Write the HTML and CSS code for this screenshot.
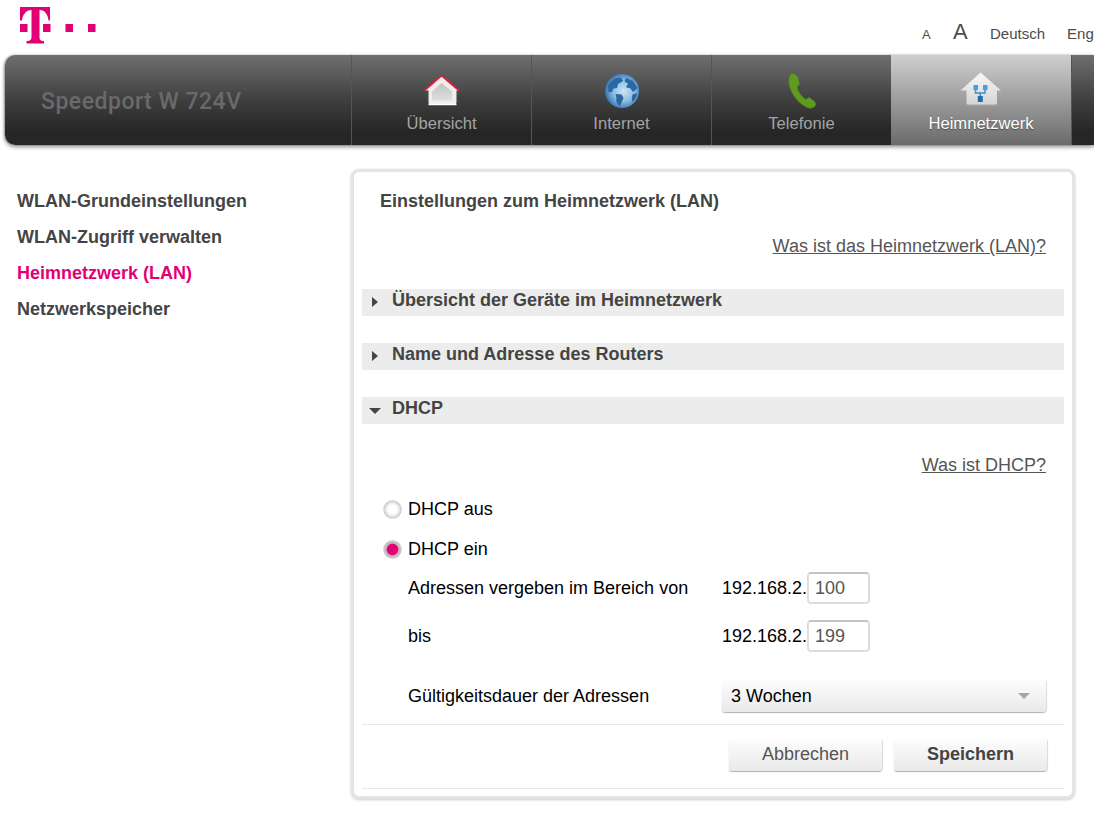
FILE: index.html
```html
<!DOCTYPE html>
<html lang="de">
<head>
<meta charset="utf-8">
<title>Speedport W 724V</title>
<link rel="stylesheet" href="styles.css">
</head>
<body>
<div class="page">
  <header class="top">
    <svg class="logo" width="78" height="37" viewBox="0 0 78 37"><g fill="#e20074"><path d="M0 0H30V13.500H28.500C28 8 25 3 19.500 3V30C19.500 33 20.500 33.800 24 34V36.500H6.500V34C10 33.800 11.500 33 11.500 30V3C6 3 2.500 8 2 13.500H0Z"/><rect x="0" y="17" width="7.500" height="8"/><rect x="23" y="17" width="7.500" height="8"/><rect x="45.500" y="17" width="7.500" height="8"/><rect x="68" y="17" width="7.500" height="8"/></g></svg>
    <nav class="tools">
      <span class="a-small">A</span>
      <span class="a-big">A</span>
      <span class="lang">Deutsch</span>
      <span class="lang">English</span>
    </nav>
  </header>
  <div class="bar">
    <div class="brand">Speedport W 724V</div>
    <div class="tab">
      <svg class="icon" width="36" height="36" viewBox="0 0 36 36"><defs><linearGradient id="hb" x1="0" y1="0" x2="0" y2="1"><stop offset="0" stop-color="#c4c4c4"/><stop offset="1" stop-color="#dedede"/></linearGradient></defs><path d="M0.500 17.500 17.500 2.500 35 17.500H32.500V29.500Q32.500 31.500 30.500 31.500H6.500Q4.500 31.500 4.500 29.500V17.500Z" fill="#eeeeee"/><path d="M8 18.500 17.500 10 28 18.500V27.500H8Z" fill="url(#hb)"/><path d="M0.500 17.500 17.500 2.500 35 17.500" fill="none" stroke="#d8203f" stroke-width="1.800"/><path d="M4.500 31.500H32.500" stroke="#fff" stroke-width="1.500"/></svg>
      <span class="tab-label">Übersicht</span>
    </div>
    <div class="tab">
      <svg class="icon" width="36" height="36" viewBox="0 0 36 36"><defs><radialGradient id="gl" cx="0.55" cy="0.5" r="0.55"><stop offset="0" stop-color="#cfe4f4"/><stop offset="0.55" stop-color="#8fbfe2"/><stop offset="1" stop-color="#3373b0"/></radialGradient></defs><circle cx="18" cy="18" r="17" fill="url(#gl)"/><path d="M4 13C7 7 12 4 17 4.500L19 8 14 11 13 15 9.500 15.500 8 19 4.500 19Z M11.500 21 17.500 21.500 19.500 25 16 33C13.500 32 11.500 28 12.500 25Z M22 5 29 8 33.500 15 29 19 26 15 22 14.500 24 10.500 20.500 8.500Z M29 21 33 20.500C33 24 31 27 28.500 29 27.500 26 27.500 23.500 29 21Z" fill="#2a68a3"/></svg>
      <span class="tab-label">Internet</span>
    </div>
    <div class="tab">
      <svg class="icon" width="36" height="36" viewBox="0 -2 36 36"><path d="M7 -1C10 -2 13 0 14 3L15.500 9 13 12C14 17 18 22 22 24.500L25 22.500 30 26C32 28 32 30 30.500 31.500 28 33.500 26 33.500 23.500 32.500 15 29 8 20 5.500 11 4.500 7 4.500 2 7 -1Z" fill="#5f9c1e" stroke="#4f8618" stroke-width="0.800"/></svg>
      <span class="tab-label">Telefonie</span>
    </div>
    <div class="tab tab-active">
      <svg class="icon" width="42" height="36" viewBox="-3 0 42 36"><defs><linearGradient id="nb" x1="0" y1="0" x2="0" y2="1"><stop offset="0" stop-color="#f8f8f8"/><stop offset="1" stop-color="#d4d4d4"/></linearGradient></defs><path d="M-2.500 17.500 17.500 -0.500 38 17.500H34V29.500Q34 32 31.500 32H6Q3.500 32 3.500 29.500V17.500Z" fill="url(#nb)"/><path d="M3.500 32H34" stroke="#a9a9a9" stroke-width="1.200"/><path d="M12.500 16V20H22V16M17.200 20V24" fill="none" stroke="#3a8fce" stroke-width="1.500"/><rect x="10.500" y="12" width="4.500" height="5" fill="#45a0de"/><rect x="20" y="12" width="4.500" height="5" fill="#45a0de"/><rect x="14.800" y="23" width="5" height="6" fill="#1f6da9"/></svg>
      <span class="tab-label">Heimnetzwerk</span>
    </div>
    <div class="bar-end"></div>
  </div>
  <div class="main">
    <aside class="side">
      <a class="side-link">WLAN-Grundeinstellungen</a>
      <a class="side-link">WLAN-Zugriff verwalten</a>
      <a class="side-link side-active">Heimnetzwerk (LAN)</a>
      <a class="side-link">Netzwerkspeicher</a>
    </aside>
    <section class="panel">
      <h1 class="title">Einstellungen zum Heimnetzwerk (LAN)</h1>
      <div class="help help-first"><a>Was ist das Heimnetzwerk (LAN)?</a></div>
      <div class="acc"><span class="tri-right"></span><span>Übersicht der Geräte im Heimnetzwerk</span></div>
      <div class="acc"><span class="tri-right"></span><span>Name und Adresse des Routers</span></div>
      <div class="acc"><span class="tri-down"></span><span>DHCP</span></div>
      <div class="help help-dhcp"><a>Was ist DHCP?</a></div>
      <div class="form">
        <div class="radio-row"><span class="radio"></span>DHCP aus</div>
        <div class="radio-row"><span class="radio radio-on"></span>DHCP ein</div>
        <div class="field"><span class="lbl">Adressen vergeben im Bereich von</span><span class="ip">192.168.2.</span><span class="input">100</span></div>
        <div class="field field-b"><span class="lbl">bis</span><span class="ip">192.168.2.</span><span class="input">199</span></div>
        <div class="field field-c"><span class="lbl">Gültigkeitsdauer der Adressen</span><span class="select">3 Wochen<span class="sel-arrow"></span></span></div>
      </div>
      <div class="actions">
        <span class="btn">Abbrechen</span>
        <span class="btn btn-primary">Speichern</span>
      </div>
    </section>
  </div>
</div>
</body>
</html>
```
FILE: styles.css
```css
* { box-sizing: border-box; }
html, body { margin: 0; padding: 0; height: 821px; overflow: hidden; background: #fff; }
body { font-family: "Liberation Sans", Arial, sans-serif; color: #000; }
.page { width: 1094px; height: 821px; overflow: hidden; }
.top { height: 55px; display: flex; padding: 7px 0 0 20px; }
.logo { display: block; flex: none; }
.tools { flex: none; margin-left: 824px; display: flex; align-items: baseline; color: #4b4b4b; font-size: 15px; height: 36px; padding-top: 12px; white-space: nowrap; }
.a-small { font-size: 13px; width: 31px; }
.a-big { font-size: 22px; width: 37px; }
.lang { margin-right: 22px; }
.bar { margin-left: 5px; height: 90px; display: flex; background: linear-gradient(#6f6f6f, #3f3f3f 50%, #262626 85%); border-radius: 10px 0 0 10px; box-shadow: 0 2px 4px rgba(0,0,0,.45), -1px 0 2px rgba(0,0,0,.25); }
.brand { width: 346px; padding: 33px 0 0 36px; font-family: Roboto, "Liberation Sans", sans-serif; font-size: 23px; font-weight: 500; letter-spacing: .5px; color: #6a6a6a; white-space: nowrap; }
.tab { width: 180px; display: flex; flex-direction: column; align-items: center; padding-top: 18px; border-left: 1px solid #555; color: #a4a4a4; font-size: 16.6px; }
.tab .icon { display: block; height: 36px; overflow: visible; }
.tab-label { margin-top: 5px; line-height: 20px; }
.tab-active { background: linear-gradient(#cfcfcf, #6a6a6a); color: #fff; border-left: 0; text-shadow: 0 1px 1px rgba(0,0,0,.4); }
.bar-end { flex: 1; border-left: 1px solid #555; }
.main { display: flex; }
.side { width: 346px; padding: 38px 0 0 17px; display: flex; flex-direction: column; }
.side-link { font-size: 18px; font-weight: 700; color: #444; line-height: 36px; height: 36px; white-space: nowrap; }
.side-active { color: #e20074; }
.panel { width: 724px; height: 630px; margin-top: 24px; margin-left: 5px; padding: 0 8px; border: 3px solid #e4e4e4; border-radius: 8px; box-shadow: 0 1px 3px rgba(0,0,0,.2); background: #fff; }
.title { margin: 0; padding: 18px 0 0 18px; height: 44px; font-size: 18px; line-height: 22px; font-weight: 700; color: #444; }
.help { text-align: right; padding-right: 18px; font-size: 18px; line-height: 22px; color: #555; height: 22px; }
.help a { text-decoration: underline; }
.help-first { margin-top: 19px; margin-bottom: 32px; }
.help-dhcp { margin-top: 30px; }
.acc { height: 27px; margin-bottom: 27px; background: #ececec; display: flex; align-items: flex-start; font-size: 18px; font-weight: 700; color: #444; line-height: 22px; }
.tri-right, .tri-down { flex: none; width: 0; height: 0; border-style: solid; border-color: transparent; }
.tri-right { margin: 8px 14px 0 10px; border-width: 5px 0 5px 6px; border-left-color: #444; }
.tri-down { margin: 11px 11px 0 7px; border-width: 6px 6px 0 6px; border-top-color: #444; }
.form { padding: 22px 0 0 21px; font-size: 18px; }
.radio-row { display: flex; align-items: center; height: 22px; margin-bottom: 18px; }
.radio-row + .radio-row { margin-bottom: 12px; }
.radio { flex: none; width: 19px; height: 19px; margin-right: 6px; border-radius: 50%; background: radial-gradient(circle closest-side, #fff 45%, #e8e8e8 70%, #cdcdcd 90%, #e4e4e4 100%); }
.radio-on { background: radial-gradient(circle closest-side, #e20074 0, #e20074 54%, #d2a8bc 66%, #c8c8c8 88%, #e0e0e0 100%); }
.field { display: flex; align-items: center; padding-left: 25px; height: 32px; }
.field-b { margin-top: 16px; }
.field-c { margin-top: 28px; }
.lbl { width: 314px; flex: none; }
.ip { flex: none; }
.input { flex: none; width: 63px; height: 32px; padding-left: 6px; border: 2px solid #dedede; border-top-color: #c4c4c4; border-radius: 4px; line-height: 28px; color: #555; }
.select { width: 324px; height: 32px; display: flex; align-items: center; justify-content: space-between; padding: 0 16px 0 9px; border-radius: 3px; background: linear-gradient(#fdfdfd, #e9e9e9); box-shadow: 0 1px 1px #b0b0b0, 1px 0 1px #e0e0e0; }
.sel-arrow { width: 0; height: 0; border-style: solid; border-color: #a6a6a6 transparent transparent; border-width: 6px 6px 0 6px; }
.actions { display: flex; justify-content: flex-end; gap: 12px; margin-top: 12px; padding: 14px 17px 0 0; border-top: 1px solid #e9e9e9; border-bottom: 1px solid #e9e9e9; height: 65px; }
.btn { width: 153px; height: 32px; padding-bottom: 2px; display: flex; align-items: center; justify-content: center; border-radius: 3px; background: linear-gradient(#fdfdfd, #e9e9e9); box-shadow: 0 1px 1px #b0b0b0, 1px 0 1px #e0e0e0; font-size: 18px; color: #555; }
.btn-primary { font-weight: 700; color: #444; }
```
